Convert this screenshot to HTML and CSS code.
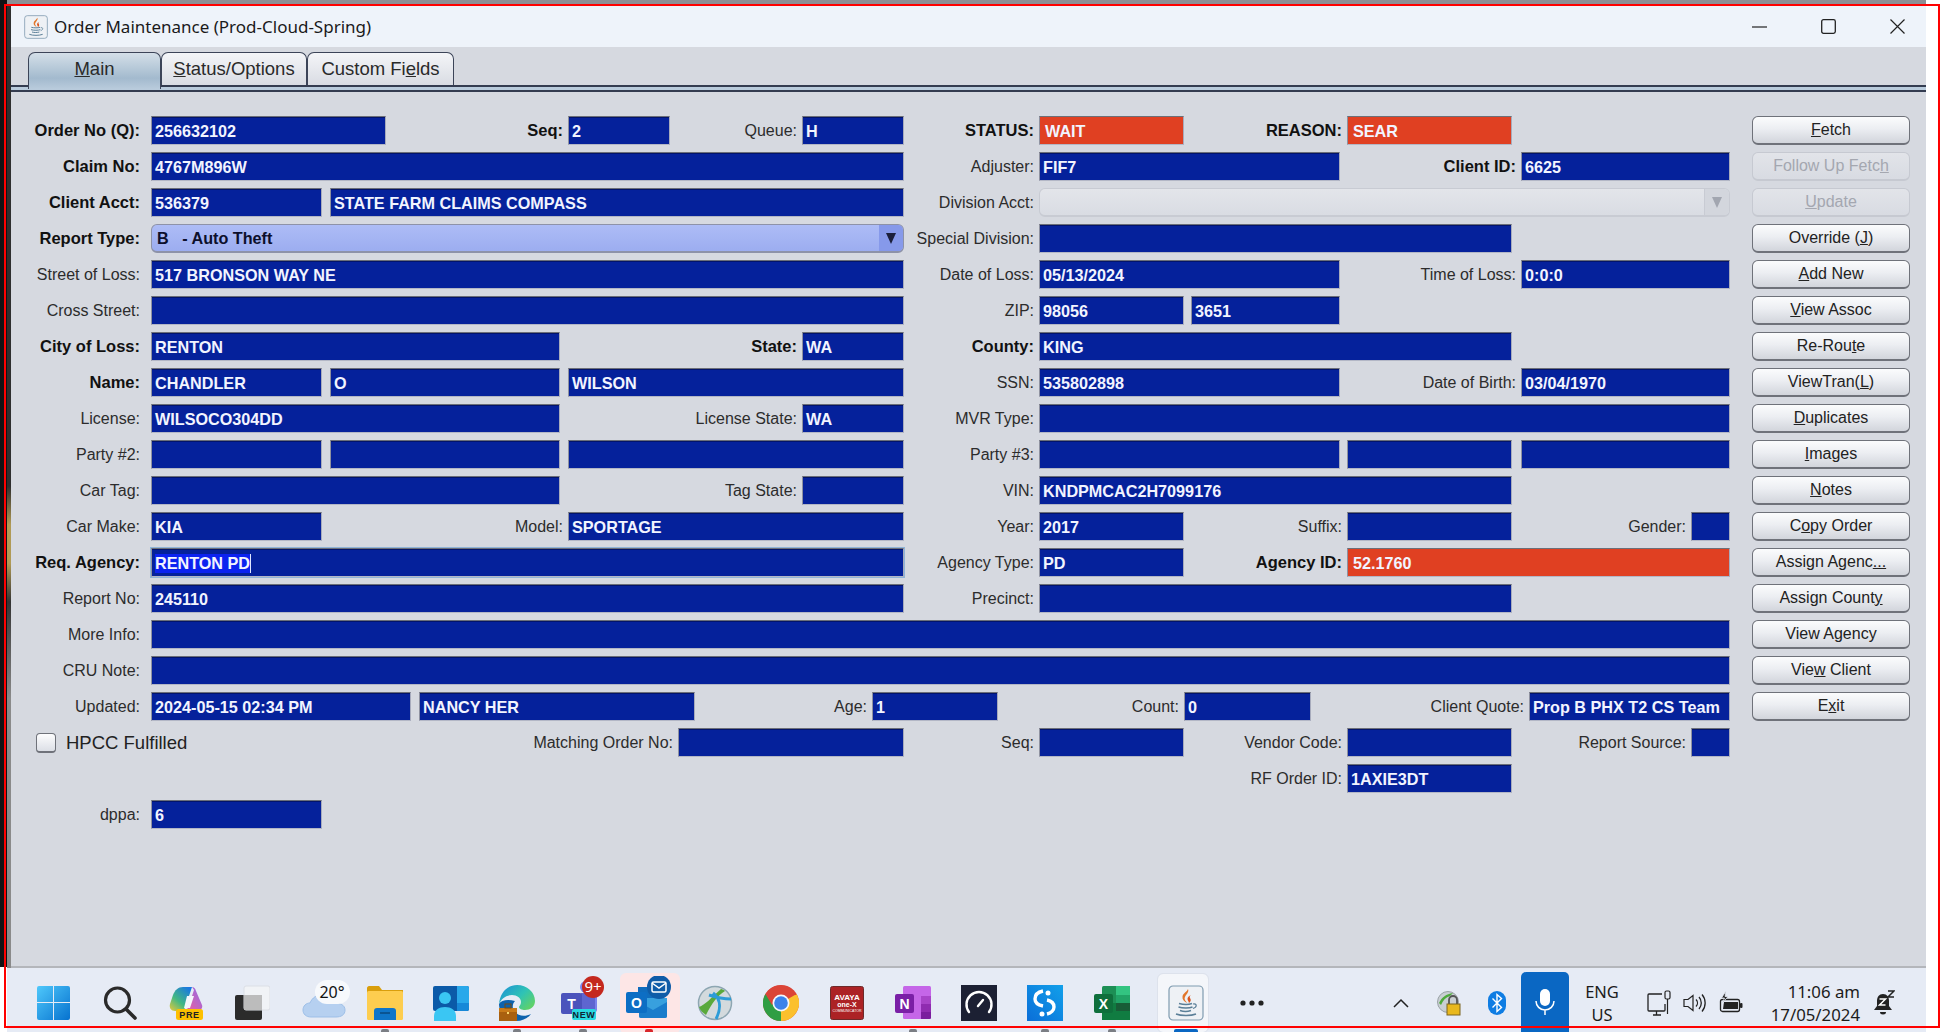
FILE: index.html
```html
<!DOCTYPE html>
<html lang="en">
<head>
    <meta charset="UTF-8">
    <title>Order Maintenance (Prod-Cloud-Spring)</title>
    <link rel="stylesheet" href="styles.css">
</head>
<body>

<svg class="defs" width="0" height="0">
    <symbol id="java" viewBox="0 0 36 36">
        <rect x="1" y="1" width="34" height="34" rx="4" fill="#eef1f5" stroke="#7f9bb0" stroke-width="1.2"/>
        <path d="M20 4c2 4-5 7-3 11 .6 1.300 1.600 2 2 3-3-1.500-5-3.500-4.500-6.500C15 8 19 7 20 4z" fill="#e2762a"/>
        <path d="M23 10c-4 2-4 4-2.500 6.500.4.600.5 1.200.3 1.800 2.500-2 2.300-3.800 1.200-5.300-.6-1-.3-2 1-3z" fill="#d9541e"/>
        <path d="M11 18.500c4 1 10 1 13 0M10.500 22c4 1.200 11 1.200 14 0M12 25.500c3 1 8 1 11 0" fill="none" stroke="#5b7f98" stroke-width="1.500"/>
        <path d="M25 19c4-.8 4.500 3 0 4.500" fill="none" stroke="#5b7f98" stroke-width="1.200"/>
        <path d="M8 29c5 2 15 2 20 0" fill="none" stroke="#5b7f98" stroke-width="1.500"/>
    </symbol>
</svg>

<div class="screen">
    <div class="top-strip"></div>

    <div class="window">
        <div class="title-bar">
            <svg class="title-icon" width="24" height="24"><use href="#java"/></svg>
            <span class="title-text">Order Maintenance (Prod-Cloud-Spring)</span>
            <div class="window-buttons">
                <svg width="15" height="15" viewBox="0 0 15 15"><path d="M0 8h15" stroke="#222" stroke-width="1.200"/></svg>
                <svg width="15" height="15" viewBox="0 0 15 15"><rect x=".7" y=".7" width="13.600" height="13.600" rx="1.800" fill="none" stroke="#222" stroke-width="1.300"/></svg>
                <svg width="15" height="15" viewBox="0 0 15 15"><path d="M.5.500l14 14M14.500.500l-14 14" stroke="#222" stroke-width="1.200"/></svg>
            </div>
        </div>

        <div class="tabs">
            <div class="tab tab-main"><u>M</u>ain</div>
            <div class="tab tab-status"><u>S</u>tatus/Options</div>
            <div class="tab tab-custom">Custom Fi<u>e</u>lds</div>
        </div>
        <div class="tab-line"></div>

        <div class="content">
            <div class="form">
                <div class="row">
                    <label class="lbl bold s11 e151">Order No (Q):</label><div class="fld s151 e386">256632102</div>
                    <label class="lbl bold s386 e568">Seq:</label><div class="fld s568 e670">2</div>
                    <label class="lbl s670 e802">Queue:</label><div class="fld s802 e904">H</div>
                    <label class="lbl bold s904 e1039">STATUS:</label><div class="fld alert s1039 e1184">WAIT</div>
                    <label class="lbl bold s1184 e1347">REASON:</label><div class="fld alert s1347 e1512">SEAR</div>
                </div>
                <div class="row">
                    <label class="lbl bold s11 e151">Claim No:</label><div class="fld s151 e904">4767M896W</div>
                    <label class="lbl s904 e1039">Adjuster:</label><div class="fld s1039 e1340">FIF7</div>
                    <label class="lbl bold s1340 e1521">Client ID:</label><div class="fld s1521 e1731">6625</div>
                </div>
                <div class="row">
                    <label class="lbl bold s11 e151">Client Acct:</label><div class="fld s151 e322">536379</div><div class="fld s330 e904">STATE FARM CLAIMS COMPASS</div>
                    <label class="lbl s904 e1039">Division Acct:</label>
                    <div class="combo disabled s1039 e1731"><span></span><i class="combo-arrow"></i></div>
                </div>
                <div class="row">
                    <label class="lbl bold s11 e151">Report Type:</label>
                    <div class="combo s151 e904"><span>B   - Auto Theft</span><i class="combo-arrow"></i></div>
                    <label class="lbl s904 e1039">Special Division:</label><div class="fld s1039 e1512"></div>
                </div>
                <div class="row">
                    <label class="lbl s11 e151">Street of Loss:</label><div class="fld s151 e904">517 BRONSON WAY NE</div>
                    <label class="lbl s904 e1039">Date of Loss:</label><div class="fld s1039 e1340">05/13/2024</div>
                    <label class="lbl s1340 e1521">Time of Loss:</label><div class="fld s1521 e1731">0:0:0</div>
                </div>
                <div class="row">
                    <label class="lbl s11 e151">Cross Street:</label><div class="fld s151 e904"></div>
                    <label class="lbl s904 e1039">ZIP:</label><div class="fld s1039 e1184">98056</div><div class="fld s1191 e1340">3651</div>
                </div>
                <div class="row">
                    <label class="lbl bold s11 e151">City of Loss:</label><div class="fld s151 e560">RENTON</div>
                    <label class="lbl bold s560 e802">State:</label><div class="fld s802 e904">WA</div>
                    <label class="lbl bold s904 e1039">County:</label><div class="fld s1039 e1512">KING</div>
                </div>
                <div class="row">
                    <label class="lbl bold s11 e151">Name:</label><div class="fld s151 e322">CHANDLER</div><div class="fld s330 e560">O</div><div class="fld s568 e904">WILSON</div>
                    <label class="lbl s904 e1039">SSN:</label><div class="fld s1039 e1340">535802898</div>
                    <label class="lbl s1340 e1521">Date of Birth:</label><div class="fld s1521 e1731">03/04/1970</div>
                </div>
                <div class="row">
                    <label class="lbl s11 e151">License:</label><div class="fld s151 e560">WILSOCO304DD</div>
                    <label class="lbl s560 e802">License State:</label><div class="fld s802 e904">WA</div>
                    <label class="lbl s904 e1039">MVR Type:</label><div class="fld s1039 e1731"></div>
                </div>
                <div class="row">
                    <label class="lbl s11 e151">Party #2:</label><div class="fld s151 e322"></div><div class="fld s330 e560"></div><div class="fld s568 e904"></div>
                    <label class="lbl s904 e1039">Party #3:</label><div class="fld s1039 e1340"></div><div class="fld s1347 e1512"></div><div class="fld s1521 e1731"></div>
                </div>
                <div class="row">
                    <label class="lbl s11 e151">Car Tag:</label><div class="fld s151 e560"></div>
                    <label class="lbl s560 e802">Tag State:</label><div class="fld s802 e904"></div>
                    <label class="lbl s904 e1039">VIN:</label><div class="fld s1039 e1512">KNDPMCAC2H7099176</div>
                </div>
                <div class="row">
                    <label class="lbl s11 e151">Car Make:</label><div class="fld s151 e322">KIA</div>
                    <label class="lbl s322 e568">Model:</label><div class="fld s568 e904">SPORTAGE</div>
                    <label class="lbl s904 e1039">Year:</label><div class="fld s1039 e1184">2017</div>
                    <label class="lbl s1184 e1347">Suffix:</label><div class="fld s1347 e1512"></div>
                    <label class="lbl s1512 e1691">Gender:</label><div class="fld s1691 e1731"></div>
                </div>
                <div class="row">
                    <label class="lbl bold s11 e151">Req. Agency:</label><div class="fld focused s151 e904"><span class="selected">RENTON PD</span><i class="caret"></i></div>
                    <label class="lbl s904 e1039">Agency Type:</label><div class="fld s1039 e1184">PD</div>
                    <label class="lbl bold s1184 e1347">Agency ID:</label><div class="fld alert s1347 e1731">52.1760</div>
                </div>
                <div class="row">
                    <label class="lbl s11 e151">Report No:</label><div class="fld s151 e904">245110</div>
                    <label class="lbl s904 e1039">Precinct:</label><div class="fld s1039 e1512"></div>
                </div>
                <div class="row">
                    <label class="lbl s11 e151">More Info:</label><div class="fld s151 e1731"></div>
                </div>
                <div class="row">
                    <label class="lbl s11 e151">CRU Note:</label><div class="fld s151 e1731"></div>
                </div>
                <div class="row">
                    <label class="lbl s11 e151">Updated:</label><div class="fld s151 e411">2024-05-15 02:34 PM</div><div class="fld s419 e695">NANCY HER</div>
                    <label class="lbl s695 e872">Age:</label><div class="fld s872 e998">1</div>
                    <label class="lbl s998 e1184">Count:</label><div class="fld s1184 e1311">0</div>
                    <label class="lbl s1311 e1529">Client Quote:</label><div class="fld s1529 e1731">Prop B PHX T2 CS Team</div>
                </div>
                <div class="row">
                    <div class="check s11 e386"><span class="check-box"></span>HPCC Fulfilled</div>
                    <label class="lbl s386 e678">Matching Order No:</label><div class="fld s678 e904"></div>
                    <label class="lbl s904 e1039">Seq:</label><div class="fld s1039 e1184"></div>
                    <label class="lbl s1184 e1347">Vendor Code:</label><div class="fld s1347 e1512"></div>
                    <label class="lbl s1512 e1691">Report Source:</label><div class="fld s1691 e1731"></div>
                </div>
                <div class="row">
                    <label class="lbl s1184 e1347">RF Order ID:</label><div class="fld s1347 e1512">1AXIE3DT</div>
                </div>
                <div class="row">
                    <label class="lbl s11 e151">dppa:</label><div class="fld s151 e322">6</div>
                </div>
            </div>

            <div class="actions">
                <button><u>F</u>etch</button>
                <button disabled>Follow Up Fetc<u>h</u></button>
                <button disabled><u>U</u>pdate</button>
                <button>Override (<u>J</u>)</button>
                <button><u>A</u>dd New</button>
                <button><u>V</u>iew Assoc</button>
                <button>Re-Rou<u>t</u>e</button>
                <button>ViewTran(<u>L</u>)</button>
                <button><u>D</u>uplicates</button>
                <button><u>I</u>mages</button>
                <button><u>N</u>otes</button>
                <button>C<u>o</u>py Order</button>
                <button>Assign Agenc<u>...</u></button>
                <button>Assign Count<u>y</u></button>
                <button>View A<u>g</u>ency</button>
                <button>Vie<u>w</u> Client</button>
                <button>E<u>x</u>it</button>
            </div>
        </div>
    </div>

    <div class="taskbar">
        <div class="task">
            <svg width="36" height="36" viewBox="0 0 36 36">
                <defs><linearGradient id="win" x1="0" y1="0" x2="1" y2="1"><stop offset="0" stop-color="#4fc8fb"/><stop offset="1" stop-color="#0672cf"/></linearGradient></defs>
                <path d="M1 3a2 2 0 0 1 2-2h14v16H1zM18 1h14a2 2 0 0 1 2 2v14H18zM1 18h16v17H3a2 2 0 0 1-2-2zM18 18h16v15a2 2 0 0 1-2 2H18z" fill="url(#win)"/>
            </svg>
        </div>
        <div class="task">
            <svg width="36" height="36" viewBox="0 0 36 36"><circle cx="15.500" cy="15" r="12" fill="none" stroke="#2a2a2a" stroke-width="3.200"/><path d="M24 24l9 9" stroke="#2a2a2a" stroke-width="3.600" stroke-linecap="round"/></svg>
        </div>
        <div class="task">
            <svg width="36" height="36" viewBox="0 0 36 36">
                <defs>
                    <linearGradient id="cop1" x1="0" y1="1" x2=".8" y2="0"><stop offset="0" stop-color="#e8c93a"/><stop offset=".45" stop-color="#42b883"/><stop offset="1" stop-color="#1a78e0"/></linearGradient>
                    <linearGradient id="cop2" x1="0" y1="1" x2="1" y2="0"><stop offset="0" stop-color="#ef5f9c"/><stop offset="1" stop-color="#8f6be8"/></linearGradient>
                </defs>
                <path d="M15 2h9l-7 21c-1 2-2 3-4 3H7c-4 0-6-3-5-7l3-9c2-5 5-8 10-8z" fill="url(#cop1)"/>
                <path d="M24 2c2 0 3 1 4 4l6 14c1 3-1 5-4 5h-9c-2 0-3 0-4 1 2-1 3-3 4-6l5-15z" fill="url(#cop2)"/>
                <path d="M19 11h7l-4 12h-6z" fill="#f4f6fb"/>
                <rect x="8" y="24" width="27" height="11" rx="2.500" fill="#fdc000"/>
                <text x="21.500" y="33" class="badge-text" text-anchor="middle" fill="#222">PRE</text>
            </svg>
        </div>
        <div class="task">
            <svg width="36" height="36" viewBox="0 0 36 36">
                <rect x="1" y="10" width="27" height="25" rx="2" fill="#2b2b2b"/>
                <rect x="10" y="1" width="26" height="24" rx="2" fill="#f3f4f6" fill-opacity=".82" stroke="#dcdfe5"/>
                <rect x="10" y="10" width="18" height="15" fill="#bcbcbc"/>
            </svg>
        </div>
        <div class="task task-weather">
            <svg width="48" height="42" viewBox="0 0 48 42">
                <path d="M9 38c-5 0-8-3-8-7s3-7 7-7c2-5 7-9 13-8 6 0 10 3 12 8 5 0 10 2 10 7s-4 7-9 7z" fill="#b6d0f0" stroke="#9dbfe8"/>
                <rect x="13" y="1" width="35" height="24" rx="12" fill="#f7f9fc"/>
                <text x="30" y="19" class="weather-text" text-anchor="middle" fill="#111">20°</text>
            </svg>
        </div>
        <div class="task has-pill">
            <svg width="36" height="36" viewBox="0 0 36 36">
                <path d="M0 3c0-1 1-2 2-2h10l3 4H36v6H0z" fill="#d99e0c"/>
                <rect x="0" y="6" width="36" height="29" rx="1.500" fill="#fdcd4f"/>
                <path d="M7 35v-9c0-2 1-3 3-3h16c2 0 3 1 3 3v9z" fill="#0f75c8"/>
                <path d="M13 28h10" stroke="#0a4a80" stroke-width="1.500"/>
            </svg>
            <i class="pill"></i>
        </div>
        <div class="task">
            <svg width="36" height="36" viewBox="0 0 36 36">
                <rect x="0" y="1" width="36" height="25" rx="2" fill="#0b5aa8"/>
                <path d="M24 1h10a2 2 0 0 1 2 2v7H24zM24 10h12v8H24z" fill="#29a8ea"/>
                <path d="M24 18h12v6a2 2 0 0 1-2 2H24z" fill="#1788d8"/>
                <circle cx="12" cy="13" r="6" fill="#3ac6f3"/>
                <path d="M1 36v-5c0-6 5-9 11-9s11 3 11 9v5z" fill="#3ac6f3"/>
            </svg>
        </div>
        <div class="task has-pill">
            <svg width="36" height="36" viewBox="0 0 36 36">
                <defs><linearGradient id="edge" x1="0" y1="0" x2="1" y2=".7"><stop offset="0" stop-color="#1b8ed8"/><stop offset=".6" stop-color="#2fc3b5"/><stop offset="1" stop-color="#5fd16a"/></linearGradient></defs>
                <path d="M18 0c10 0 18 7 18 16 0 6-5 9-10 9-3 0-6-1-6-3 0-1 2-2 2-5 0-4-4-7-9-7-6 0-11 4-13 9C1 8 8 0 18 0z" fill="url(#edge)"/>
                <path d="M0 19c0 9 7 17 17 17 7 0 12-3 15-7-6 3-13 2-16-2-3-3-3-8 0-11-7-2-14-1-16 3z" fill="#0c62ad"/>
                <rect x="0" y="23" width="18" height="13" fill="#a9600f"/>
                <rect x="0" y="23" width="18" height="4" fill="#c97a18"/>
                <rect x="6" y="19" width="6" height="4" fill="none" stroke="#7b4a0a"/>
                <rect x="8" y="27" width="2" height="2" fill="#f8d66c"/>
            </svg>
            <i class="pill"></i>
        </div>
        <div class="task task-wide has-pill">
            <svg width="46" height="46" viewBox="0 0 46 46">
                <rect x="24" y="15" width="13" height="21" rx="2" fill="#7b83eb"/>
                <circle cx="26" cy="11" r="6" fill="#7b83eb"/>
                <path d="M21 17h14v16a8 8 0 0 1-14 3z" fill="#5e65d0"/>
                <rect x="1" y="17" width="21" height="21" rx="2" fill="#4b53bc"/>
                <text x="11.500" y="33" class="teams-text" text-anchor="middle" fill="#fff">T</text>
                <circle cx="33" cy="11" r="11" fill="#c4281e"/>
                <text x="33" y="16" class="count-text" text-anchor="middle" fill="#fff">9+</text>
                <rect x="12" y="33" width="24" height="11" rx="2" fill="#28d9e0"/>
                <text x="24" y="42" class="badge-text" text-anchor="middle" fill="#123">NEW</text>
            </svg>
            <i class="pill"></i>
        </div>
        <div class="task task-outlook">
            <svg width="46" height="46" viewBox="0 0 46 46">
                <rect x="12" y="11" width="25" height="14" fill="#0f6cbd"/>
                <rect x="24" y="11" width="13" height="8" fill="#2aa0e6"/>
                <path d="M13 22h28v18a2 2 0 0 1-2 2H15a2 2 0 0 1-2-2z" fill="#38a0de"/>
                <path d="M13 26l14 8 14-8v14a2 2 0 0 1-2 2H15a2 2 0 0 1-2-2z" fill="#1a7ccb"/>
                <rect x="0" y="16" width="21" height="21" rx="2" fill="#0d6ec4"/>
                <text x="10.500" y="32" class="teams-text" text-anchor="middle" fill="#fff">O</text>
                <circle cx="33" cy="11" r="12" fill="#0f5ca8"/>
                <rect x="26" y="6" width="14" height="10" rx="1.500" fill="none" stroke="#fff" stroke-width="1.500"/>
                <path d="M26 7l7 5 7-5" fill="none" stroke="#fff" stroke-width="1.500"/>
            </svg>
            <i class="pill pill-red"></i>
        </div>
        <div class="task">
            <svg width="36" height="36" viewBox="0 0 36 36">
                <circle cx="18" cy="18" r="16.500" fill="#d3dadd" stroke="#8da6b2" stroke-width="1.500"/>
                <path d="M2 22C8 20 14 13 24 4c1 0 3 1 4 2-8 5-13 12-19 24-3-2-6-5-7-8z" fill="#59a93b"/>
                <path d="M12 10c6 2 14 4 22 4M16 8c8 6 8 16 3 26" fill="none" stroke="#2d9cd8" stroke-width="3"/>
            </svg>
        </div>
        <div class="task">
            <svg width="36" height="36" viewBox="0 0 36 36">
                <circle cx="18" cy="18" r="18" fill="#db4437"/>
                <path d="M18 18L2.400 9A18 18 0 0 0 18 36z" fill="#2f9e44"/>
                <path d="M18 18V36A18 18 0 0 0 33.600 9z" fill="#fbc02d"/>
                <path d="M18 10h15.600A18 18 0 0 0 2.400 9L9 20z" fill="#db4437"/>
                <circle cx="18" cy="18" r="8.500" fill="#f4f6fb"/>
                <circle cx="18" cy="18" r="6.800" fill="#3b82ea"/>
            </svg>
        </div>
        <div class="task">
            <svg width="34" height="34" viewBox="0 0 34 34">
                <rect x=".5" y=".5" width="33" height="33" rx="2" fill="#ac2225" stroke="#6d2a2a"/>
                <text x="17" y="14" class="avaya-text" text-anchor="middle" fill="#fff">AVAYA</text>
                <text x="17" y="21" class="avaya-small" text-anchor="middle" fill="#fff">one-X</text>
                <text x="17" y="26" class="avaya-tiny" text-anchor="middle" fill="#fff">COMMUNICATOR</text>
            </svg>
        </div>
        <div class="task has-pill">
            <svg width="36" height="36" viewBox="0 0 36 36">
                <rect x="8" y="1" width="28" height="33" rx="1.500" fill="#c566e8"/>
                <rect x="26" y="11" width="10" height="8" fill="#a844c8"/>
                <path d="M26 19h10v8H26z" fill="#8f2cb0"/>
                <path d="M26 27h10v5.500a1.500 1.500 0 0 1-1.500 1.500H26z" fill="#7a1e9e"/>
                <rect x="0" y="9" width="19" height="19" rx="2" fill="#7a1fa6"/>
                <text x="9.500" y="24" class="teams-text" text-anchor="middle" fill="#fff">N</text>
            </svg>
            <i class="pill"></i>
        </div>
        <div class="task">
            <svg width="36" height="36" viewBox="0 0 36 36">
                <rect width="36" height="36" fill="#1c2033"/>
                <path d="M8 27a12.500 12.500 0 1 1 20 0" fill="none" stroke="#fff" stroke-width="2.400" stroke-linecap="round"/>
                <path d="M17 21l5-6" stroke="#fff" stroke-width="2.400" stroke-linecap="round"/>
            </svg>
        </div>
        <div class="task has-pill">
            <svg width="36" height="36" viewBox="0 0 36 36">
                <defs><linearGradient id="sblue" x1="0" y1="1" x2="1" y2="0"><stop offset="0" stop-color="#0a6ed8"/><stop offset="1" stop-color="#12a0ea"/></linearGradient></defs>
                <rect width="36" height="36" fill="url(#sblue)"/>
                <path d="M16 6c-5 1-8 4-8 8s3 6 8 7" fill="none" stroke="#fff" stroke-width="3.400"/>
                <path d="M20 15c5 1 7 4 7 7s-3 6-7 7" fill="none" stroke="#fff" stroke-width="3.400"/>
                <circle cx="21" cy="8" r="2.500" fill="#fff"/><circle cx="15" cy="29" r="2.500" fill="#fff"/>
            </svg>
            <i class="pill"></i>
        </div>
        <div class="task has-pill">
            <svg width="36" height="36" viewBox="0 0 36 36">
                <rect x="8" y="1" width="28" height="34" rx="1.500" fill="#1d8f55"/>
                <rect x="22" y="1" width="14" height="9" fill="#33c481"/>
                <rect x="22" y="10" width="14" height="8" fill="#21a366"/>
                <rect x="8" y="18" width="28" height="17" fill="#107c41"/>
                <rect x="22" y="18" width="14" height="8" fill="#185c37"/>
                <rect x="0" y="9" width="19" height="19" rx="2" fill="#0f6f3c"/>
                <text x="9.500" y="24" class="teams-text" text-anchor="middle" fill="#fff">X</text>
            </svg>
            <i class="pill"></i>
        </div>
        <div class="task task-java">
            <svg width="36" height="36"><use href="#java"/></svg>
            <i class="pill pill-blue"></i>
        </div>
        <div class="task task-more">
            <svg width="24" height="6" viewBox="0 0 24 6"><circle cx="3" cy="3" r="2.600" fill="#222"/><circle cx="12" cy="3" r="2.600" fill="#222"/><circle cx="21" cy="3" r="2.600" fill="#222"/></svg>
        </div>

        <div class="tray">
            <svg class="tray-chevron" width="16" height="10" viewBox="0 0 16 10"><path d="M1 9l7-7 7 7" fill="none" stroke="#222" stroke-width="1.500"/></svg>
            <svg class="tray-vpn" width="24" height="26" viewBox="0 0 24 26">
                <circle cx="11" cy="12" r="10.500" fill="#c9cfd3" stroke="#9aa2a6"/>
                <path d="M2 13C5 7 9 4 16 3l-3 3C9 7 6 10 4 15z" fill="#4eaa3c"/>
                <path d="M12 14v-4a4 4 0 0 1 8 0v4" fill="none" stroke="#555" stroke-width="1.800"/>
                <rect x="10" y="14" width="13" height="11" fill="#e9b81d" stroke="#7a6420"/>
            </svg>
            <svg class="tray-bt" width="18" height="24" viewBox="0 0 18 24">
                <rect width="18" height="24" rx="9" fill="#0f7de3"/>
                <path d="M4.500 7.500l9 9L9 20.500V3.500l4.500 4-9 9" fill="none" stroke="#fff" stroke-width="1.400"/>
            </svg>
            <div class="tray-mic">
                <svg width="20" height="26" viewBox="0 0 20 26">
                    <rect x="5" y="0" width="10" height="17" rx="5" fill="#fff"/>
                    <path d="M1 12a9 9 0 0 0 18 0M10 21v5" fill="none" stroke="#fff" stroke-width="1.500"/>
                </svg>
            </div>
            <div class="tray-lang">ENG<br>US</div>
            <svg class="tray-net" width="24" height="26" viewBox="0 0 24 26">
                <path d="M15 4H2a1 1 0 0 0-1 1v15a1 1 0 0 0 1 1h15a1 1 0 0 0 1-1v-6" fill="none" stroke="#222" stroke-width="1.300"/>
                <path d="M6 25h8M9.500 21v4" stroke="#222" stroke-width="1.300"/>
                <rect x="18" y="1" width="5" height="8" rx="1.500" fill="none" stroke="#222" stroke-width="1.200"/>
                <path d="M20.500 9v15" stroke="#222" stroke-width="1.200"/>
            </svg>
            <svg class="tray-vol" width="24" height="22" viewBox="0 0 24 22">
                <path d="M1 7.500h4L10 3.500v15l-5-4H1z" fill="none" stroke="#222" stroke-width="1.200"/>
                <path d="M13 7.500a5 5 0 0 1 0 7M16 5a9 9 0 0 1 0 12M19 2.500a13 13 0 0 1 0 17" fill="none" stroke="#222" stroke-width="1.300"/>
            </svg>
            <svg class="tray-bat" width="24" height="24" viewBox="0 0 24 24">
                <rect x="1.500" y="8.500" width="19" height="12" rx="2" fill="none" stroke="#222" stroke-width="1.300"/>
                <path d="M5 11h14v7H4z" fill="#222"/>
                <rect x="21" y="12" width="2.500" height="5" rx="1" fill="#222"/>
                <path d="M7 0L2.500 7h3L3.500 12 9 5.500H6z" fill="#222" stroke="#e6ebf5" stroke-width=".8"/>
            </svg>
            <div class="tray-clock">11:06 am<br>17/05/2024</div>
            <svg class="tray-bell" width="21" height="26" viewBox="0 0 21 26">
                <path d="M9 4C5 4 3 7 3 11v5l-3 4h18l-3-4v-5c0-4-2-7-6-7z" fill="#222"/>
                <path d="M6 22a3 2.500 0 0 0 6 0z" fill="#222"/>
                <path d="M5.500 9h6l-6 6h6" fill="none" stroke="#fff" stroke-width="1.500"/>
                <path d="M14 1h6l-6 6h6" fill="none" stroke="#222" stroke-width="1.500"/>
            </svg>
        </div>
    </div>

    <div class="red-frame"></div>
</div>

</body>
</html>
```

FILE: styles.css
```css
:root {
    --form-cols:
        [x11] 140px [x151] 171px [x322] 8px [x330] 56px [x386] 25px [x411] 8px [x419] 141px
        [x560] 8px [x568] 102px [x670] 8px [x678] 17px [x695] 107px [x802] 70px [x872] 32px
        [x904] 94px [x998] 41px [x1039] 145px [x1184] 7px [x1191] 120px [x1311] 29px [x1340] 7px
        [x1347] 165px [x1512] 9px [x1521] 8px [x1529] 162px [x1691] 39px [x1731];
}

html, body {
    margin: 0;
    height: 100%;
    background: #fff;
    overflow: hidden;
}

.defs {
    position: absolute;
}

.screen {
    position: relative;
    width: 1926px;
    height: 1032px;
    padding-left: 7px;
    box-sizing: border-box;
    display: flex;
    flex-direction: column;
    background: linear-gradient(#121214 0 967px, #fff 967px) no-repeat;
    background-size: 7px 100%;
    font-family: "Liberation Sans", Arial, sans-serif;
}

.top-strip {
    height: 4px;
    flex: none;
    background: #8d8f94;
}

.red-frame {
    position: absolute;
    left: 4px;
    top: 4px;
    width: 1932px;
    height: 1020px;
    border: 2px solid #f00;
    pointer-events: none;
}

/* window */
.window {
    flex: 1;
    min-height: 0;
    display: flex;
    flex-direction: column;
    background: #d6d9e0;
    border-left: 4px solid #3b3a38;
    border-image: linear-gradient(#2e2e2e 50%, #b09a55 54%, #b09a55 58%, #333 62%, #8a8a8a 72%) 1;
    border-width: 0 0 0 4px;
    box-shadow: inset 0 -2px #b4b6bb;
}

.title-bar {
    height: 43px;
    flex: none;
    display: flex;
    align-items: center;
    background: #eef3fa;
    padding: 2px 21px 0 13px;
    box-sizing: border-box;
}

.title-icon {
    flex: none;
}

.title-text {
    margin-left: 6px;
    font-family: "Noto Sans", sans-serif;
    font-size: 17px;
    color: #1a1a1a;
}

.window-buttons {
    margin-left: auto;
    display: flex;
    gap: 54px;
}

/* tabs */
.tabs {
    height: 38px;
    flex: none;
    padding: 5px 0 0 17px;
    box-sizing: border-box;
    display: flex;
    align-items: flex-start;
}

.tab {
    height: 33px;
    box-sizing: border-box;
    display: flex;
    align-items: center;
    justify-content: center;
    font-size: 18.500px;
    color: #2a2a2a;
    border: 1.500px solid #3c4458;
    border-bottom: none;
    border-radius: 7px 7px 0 0;
    background: linear-gradient(#f4f5f8, #d9dce3);
}

.tab-main {
    width: 133px;
    height: 37px;
    position: relative;
    background: linear-gradient(#d4dfe8, #a3bace 70%, #b9cbdc);
    padding-bottom: 4px;
}

.tab-status {
    width: 146px;
}

.tab-custom {
    width: 147px;
}

.tab-line {
    height: 7px;
    flex: none;
    box-sizing: border-box;
    background: #b9cbdc;
    border-top: 2px solid #343c50;
    border-bottom: 2px solid #343c50;
}

.content {
    display: flex;
    padding-top: 24px;
    gap: 22px;
}

/* form grid */
.form {
    display: flex;
    flex-direction: column;
    gap: 7px;
}

.row {
    display: grid;
    grid-template-columns: var(--form-cols);
    height: 29px;
}

.lbl {
    display: flex;
    align-items: center;
    justify-content: flex-end;
    white-space: nowrap;
    font-size: 16px;
    color: #2c2c2c;
    padding-right: 5px;
}

.lbl.bold {
    font-weight: bold;
    font-size: 16.500px;
    color: #111;
}

.lbl.s11 {
    padding-right: 11px;
}

.fld {
    display: flex;
    align-items: center;
    box-sizing: border-box;
    padding: 1px 0 0 3px;
    overflow: hidden;
    white-space: nowrap;
    font-size: 16.200px;
    font-weight: bold;
    color: #f2f4ff;
    background: #05219b;
    border: 1px solid;
    border-color: #6c6f78 #a7abbc #b3b7c6 #8f92a0;
    box-shadow: inset 0 1px #03146a;
}

.fld.alert {
    padding-left: 5px;
    background: #e04022;
    box-shadow: none;
}

.fld.focused {
    outline: 1.500px solid #8fb4d8;
}

.selected {
    background: #0c22f0;
}

.caret {
    width: 1px;
    height: 19px;
    background: #dfe6ff;
}

.combo {
    display: flex;
    align-items: center;
    justify-content: space-between;
    box-sizing: border-box;
    padding-left: 5px;
    white-space: pre;
    font-size: 16.200px;
    font-weight: bold;
    color: #0c0f2c;
    background: linear-gradient(#adbcf6, #9cadf0);
    border: 1px solid #8d92a8;
    border-bottom-width: 2px;
    border-radius: 6px;
    overflow: hidden;
}

.combo-arrow {
    align-self: stretch;
    width: 24px;
    position: relative;
    background: #8699ea;
}

.combo-arrow::after {
    content: "";
    position: absolute;
    left: 7px;
    top: 8px;
    border: 5px solid transparent;
    border-top: 11px solid #1b1f3c;
    border-bottom: none;
}

.combo.disabled {
    background: linear-gradient(#e3e5ea, #d9dce3);
    border-color: #c8cbd3;
}

.combo.disabled .combo-arrow {
    background: #d3d6dd;
    border-left: 1px solid #c8cbd3;
}

.combo.disabled .combo-arrow::after {
    border-top-color: #a2a6b0;
}

.check {
    display: flex;
    align-items: center;
    font-size: 18.500px;
    color: #222;
    padding-left: 25px;
}

.check-box {
    width: 20px;
    height: 20px;
    box-sizing: border-box;
    margin-right: 10px;
    border: 1px solid #6f727a;
    border-bottom-width: 2px;
    border-radius: 4px;
    background: linear-gradient(#fdfdfe, #dcdfe6);
}

/* column placement, numbers are the page x of the grid line */
.s11 { grid-column-start: x11; }
.s151 { grid-column-start: x151; }
.s322 { grid-column-start: x322; }
.s330 { grid-column-start: x330; }
.s386 { grid-column-start: x386; }
.s419 { grid-column-start: x419; }
.s560 { grid-column-start: x560; }
.s568 { grid-column-start: x568; }
.s670 { grid-column-start: x670; }
.s678 { grid-column-start: x678; }
.s695 { grid-column-start: x695; }
.s802 { grid-column-start: x802; }
.s872 { grid-column-start: x872; }
.s904 { grid-column-start: x904; }
.s998 { grid-column-start: x998; }
.s1039 { grid-column-start: x1039; }
.s1184 { grid-column-start: x1184; }
.s1191 { grid-column-start: x1191; }
.s1311 { grid-column-start: x1311; }
.s1340 { grid-column-start: x1340; }
.s1347 { grid-column-start: x1347; }
.s1512 { grid-column-start: x1512; }
.s1521 { grid-column-start: x1521; }
.s1529 { grid-column-start: x1529; }
.s1691 { grid-column-start: x1691; }

.e151 { grid-column-end: x151; }
.e322 { grid-column-end: x322; }
.e386 { grid-column-end: x386; }
.e411 { grid-column-end: x411; }
.e560 { grid-column-end: x560; }
.e568 { grid-column-end: x568; }
.e670 { grid-column-end: x670; }
.e678 { grid-column-end: x678; }
.e695 { grid-column-end: x695; }
.e802 { grid-column-end: x802; }
.e872 { grid-column-end: x872; }
.e904 { grid-column-end: x904; }
.e998 { grid-column-end: x998; }
.e1039 { grid-column-end: x1039; }
.e1184 { grid-column-end: x1184; }
.e1311 { grid-column-end: x1311; }
.e1340 { grid-column-end: x1340; }
.e1347 { grid-column-end: x1347; }
.e1512 { grid-column-end: x1512; }
.e1521 { grid-column-end: x1521; }
.e1529 { grid-column-end: x1529; }
.e1691 { grid-column-end: x1691; }
.e1731 { grid-column-end: x1731; }

/* action buttons */
.actions {
    width: 158px;
    display: flex;
    flex-direction: column;
    gap: 7px;
}

.actions button {
    height: 29px;
    padding: 0;
    font-family: "Liberation Sans", Arial, sans-serif;
    font-size: 16px;
    color: #222;
    border: 1px solid #6f727a;
    border-bottom-width: 2px;
    border-radius: 6px;
    background: linear-gradient(#fbfcfd, #eceef2 45%, #d2d5dc);
}

.actions button:disabled {
    color: #a4a7b0;
    border-color: #c6c9d1;
    background: linear-gradient(#e2e4e9, #d8dbe2);
}

/* taskbar */
.taskbar {
    height: 64px;
    flex: none;
    display: flex;
    padding-left: 14px;
    padding-right: 31px;
    box-sizing: border-box;
    background: #e6ebf5;
}

.task {
    position: relative;
    flex: none;
    width: 66.100px;
    height: 70px;
    display: flex;
    justify-content: center;
    align-items: center;
}

.task svg {
    flex: none;
}

.task-weather svg {
    margin-left: 16px;
    margin-top: -6px;
}

.task-wide svg {
    margin-top: -8px;
}

.task-outlook svg {
    position: relative;
    margin-top: -8px;
}

.task-outlook::before {
    content: "";
    position: absolute;
    left: 4px;
    right: 2px;
    top: 5px;
    bottom: 4px;
    border-radius: 6px;
    background: #fde6e6;
}

.task-java {
    margin-left: 8px;
}

.task-java::before {
    content: "";
    position: absolute;
    left: 5px;
    right: 11px;
    top: 6px;
    bottom: 6px;
    border-radius: 5px;
    background: #f4f6fa;
    outline: 1px solid #dde2ec;
}

.task-java svg {
    position: relative;
}

.pill {
    position: absolute;
    left: 50%;
    bottom: 6px;
    width: 8px;
    height: 3px;
    margin-left: -4px;
    border-radius: 2px 2px 0 0;
    background: #7b7e84;
}

.pill-red {
    background: #d9262b;
}

.pill-blue {
    width: 24px;
    margin-left: -12px;
    background: #0a67c3;
}

.tray {
    margin-left: auto;
    display: flex;
    align-items: center;
    height: 70px;
    color: #1c1c1c;
    font-family: "Noto Sans", sans-serif;
}

.tray svg {
    flex: none;
}

.tray-vpn { margin-left: 28px; }
.tray-bt { margin-left: 27px; }
.tray-net { margin-left: 28px; }
.tray-vol { margin-left: 12px; }
.tray-bat { margin-left: 12px; }
.tray-bell { margin-left: 14px; }

.tray-mic {
    align-self: stretch;
    width: 48px;
    margin: 4px 0 6px 15px;
    border-radius: 5px 5px 0 0;
    background: #0a67c3;
    display: flex;
    align-items: center;
    justify-content: center;
}

.tray-lang {
    margin-left: 16px;
    width: 34px;
    text-align: center;
    font-size: 16.500px;
    line-height: 23px;
}

.tray-clock {
    margin-left: 26px;
    width: 91px;
    text-align: right;
    white-space: nowrap;
    font-size: 16.800px;
    line-height: 23px;
}

/* svg text */
.badge-text {
    font: bold 9px "Liberation Sans", sans-serif;
    letter-spacing: .6px;
}

.weather-text {
    font: 16px "Noto Sans", sans-serif;
}

.teams-text {
    font: bold 14px "Liberation Sans", sans-serif;
}

.count-text {
    font: 15px "Noto Sans", sans-serif;
}

.avaya-text {
    font: bold 8px "Liberation Sans", sans-serif;
}

.avaya-small {
    font: bold 7px "Liberation Sans", sans-serif;
}

.avaya-tiny {
    font: 3.500px "Liberation Sans", sans-serif;
}
```
